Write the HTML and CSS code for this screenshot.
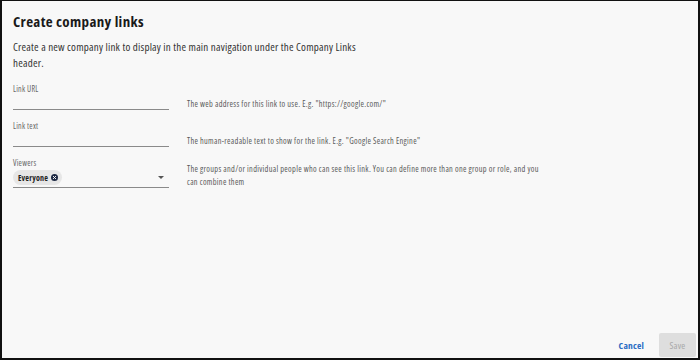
FILE: index.html
```html
<!DOCTYPE html>
<html>
<head>
<meta charset="utf-8">
<link rel="stylesheet" href="styles.css">
</head>
<body>
<div class="frame">
  <main class="content">
    <h1 class="title">Create company links</h1>
    <p class="intro">Create a new company link to display in the main navigation under the Company Links header.</p>

    <div class="field">
      <div class="control">
        <div class="label">Link URL</div>
        <div class="input"></div>
      </div>
      <div class="help">The web address for this link to use. E.g. "https://google.com/"</div>
    </div>

    <div class="field">
      <div class="control">
        <div class="label">Link text</div>
        <div class="input"></div>
      </div>
      <div class="help">The human-readable text to show for the link. E.g. "Google Search Engine"</div>
    </div>

    <div class="field">
      <div class="control">
        <div class="label">Viewers</div>
        <div class="input select">
          <span class="chip">Everyone
            <svg class="chip-x" viewBox="0 0 10 10" width="7" height="7"><circle cx="5" cy="5" r="5" fill="#1f2a44"/><path d="M3.3 3.3 6.7 6.7M6.7 3.3 3.3 6.7" stroke="#fff" stroke-width="1.4" stroke-linecap="round"/></svg>
          </span>
          <svg class="caret" viewBox="0 0 8 4" width="6" height="3"><path d="M0 0h8L4 4z" fill="#555"/></svg>
        </div>
      </div>
      <div class="help">The groups and/or individual people who can see this link. You can define more than one group or role, and you can combine them</div>
    </div>
  </main>
  <footer class="actions">
    <button class="btn-link">Cancel</button>
    <button class="btn-save" disabled>Save</button>
  </footer>
</div>
</body>
</html>
```

FILE: styles.css
```css
html, body {
  margin: 0;
  padding: 0;
}
body {
  width: 700px;
  height: 360px;
  font-family: "Open Sans", "Noto Sans", sans-serif;
  font-stretch: 75%;
  color: #222;
}
.frame {
  box-sizing: border-box;
  width: 700px;
  height: 360px;
  background: #f8f8f8;
  border: 2px solid #111;
  border-top-width: 1px;
  display: flex;
  flex-direction: column;
}
.content {
  padding: 0 11px;
  flex: 1;
}
.title {
  margin: 10px 0 0;
  font-size: 15px;
  font-weight: 700;
  letter-spacing: 0.35px;
  line-height: 20px;
  color: #1a1a1a;
}
.intro {
  margin: 8px 0 0;
  width: 345px;
  font-size: 11px;
  letter-spacing: 0.22px;
  line-height: 16px;
  color: #333;
}
.field {
  display: flex;
  align-items: flex-end;
  gap: 18px;
  margin-top: 13px;
}
.field + .field {
  margin-top: 11px;
}
.control {
  width: 156px;
  flex: none;
}
.label {
  font-size: 8px;
  letter-spacing: 0.25px;
  line-height: 10px;
  color: #666;
}
.input {
  height: 15px;
  border-bottom: 1px solid #8a8a8a;
}
.select {
  height: 19px;
  display: flex;
  align-items: center;
  justify-content: space-between;
  padding-right: 5px;
}
.chip {
  display: inline-flex;
  align-items: center;
  gap: 3px;
  height: 15px;
  padding: 0 4px 0 5px;
  border-radius: 8px;
  background: #e6e6e6;
  font-size: 8px;
  letter-spacing: 0.2px;
  font-weight: 700;
  color: #222;
  margin-top: -1px;
}
.chip-x {
  display: block;
}
.caret {
  display: block;
}
.help {
  width: 358px;
  font-size: 8.3px;
  letter-spacing: 0.3px;
  line-height: 13px;
  color: #5a5a5a;
}
.actions {
  display: flex;
  justify-content: flex-end;
  align-items: center;
  gap: 15px;
  padding: 0 2px 1px 0;
}
.btn-link {
  border: 0;
  background: none;
  font-family: inherit;
  font-stretch: inherit;
  font-size: 9.5px;
  letter-spacing: 0.2px;
  font-weight: 700;
  color: #2b6cc4;
  padding: 0;
}
.btn-save {
  width: 37px;
  height: 24px;
  border: 0;
  border-radius: 2px;
  background: #dedede;
  color: #a8a8a8;
  font-family: inherit;
  font-stretch: inherit;
  font-size: 9.5px;
  letter-spacing: 0.2px;
  padding: 0;
}
```
